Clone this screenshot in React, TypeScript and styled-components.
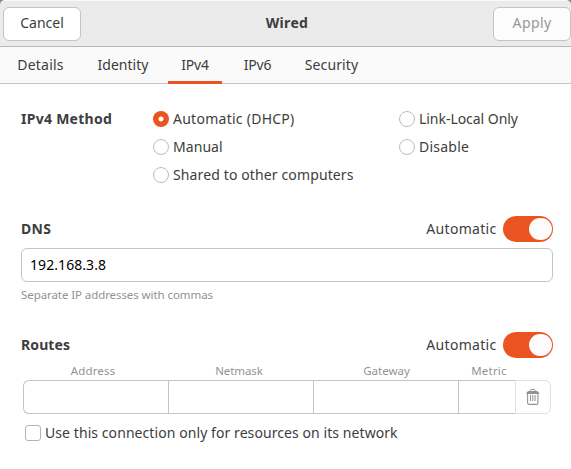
import React, { useState } from 'react';
import styled, { createGlobalStyle, css } from 'styled-components';

const accent = '#e95420';
const line = '#c4c4c4';

const GlobalStyle = createGlobalStyle`
  * { box-sizing: border-box; }
  body {
    margin: 0;
    background: #fff;
    color: #3d3d3d;
    font: 14px/20px "Noto Sans", "Open Sans", sans-serif;
  }
  button, input { font: inherit; color: inherit; }
`;

const Dialog = styled.div`
  width: 571px;
  height: 469px;
  overflow: hidden;
  background: #fff;
`;

const Corners = styled.div`
  height: 47px;
  background: #8a8a8a;
`;

const HeaderBar = styled.header`
  height: 47px;
  display: grid;
  grid-template-columns: 78px 1fr 78px;
  align-items: center;
  padding: 0 0 0 3px;
  background: #ebebeb;
  border-top: 1px solid #f9f9f9;
  border-bottom: 1px solid #b8b8b8;
  border-radius: 5px 5px 0 0;
`;

const HeaderButton = styled.button<{ $tracking?: number }>`
  height: 34px;
  padding: 0 0 2px;
  border: 1px solid ${line};
  border-radius: 6px;
  background: #fff;
  letter-spacing: ${p => p.$tracking ?? 0}px;
  &:disabled { background: #fcfcfc; color: #989898; }
`;

const Title = styled.h1`
  margin: 0;
  padding-bottom: 2px;
  text-align: center;
  font-size: 14px;
  line-height: 20px;
  letter-spacing: 0.3px;
`;

const TabBar = styled.nav`
  height: 37px;
  display: flex;
  padding-left: 3px;
  background: #fafafa;
  border-bottom: 1px solid ${line};
`;

const Tab = styled.button<{ $width: number; $active?: boolean; $tracking: number }>`
  width: ${p => p.$width}px;
  height: 37px;
  padding: 1px 0 0;
  border: 0;
  border-bottom: 3px solid ${p => (p.$active ? accent : 'transparent')};
  background: none;
  letter-spacing: ${p => p.$tracking}px;
  line-height: 34px;
`;

const Content = styled.main`
  padding: 25px 18px 0 21px;
`;

const MethodSection = styled.section`
  display: grid;
  grid-template-columns: 132px 246px 1fr;
  height: 107px;
`;

const SectionTitle = styled.h2<{ $tracking?: number }>`
  margin: 0;
  font-size: 14px;
  line-height: 20px;
  letter-spacing: ${p => p.$tracking ?? 0}px;
`;

const RadioColumn = styled.div`
  display: flex;
  flex-direction: column;
  gap: 8px;
`;

const Choice = styled.label<{ $tracking?: number }>`
  display: flex;
  align-items: center;
  gap: 4px;
  height: 20px;
  white-space: nowrap;
  letter-spacing: ${p => p.$tracking ?? 0}px;
`;

const Radio = styled.input.attrs({ type: 'radio' })`
  appearance: none;
  flex: none;
  width: 16px;
  height: 16px;
  margin: 0;
  border: 1px solid #bdbdbd;
  border-radius: 50%;
  background: #fff;
  &:checked {
    border: 0;
    background: radial-gradient(circle, #fff 2.1px, ${accent} 2.9px);
  }
`;

const Check = styled.input.attrs({ type: 'checkbox' })`
  appearance: none;
  flex: none;
  width: 16px;
  height: 16px;
  margin: 0;
  border: 1px solid #b4b4b4;
  border-radius: 3px;
  background: #fff;
  &:checked { background: ${accent}; }
`;

const SectionHead = styled.div`
  display: flex;
  align-items: center;
  height: 26px;
`;

const SwitchLabel = styled.span`
  margin-left: auto;
  margin-right: 6.5px;
  letter-spacing: 0.3px;
`;

const SwitchTrack = styled.button<{ $on: boolean }>`
  display: flex;
  align-items: center;
  justify-content: ${p => (p.$on ? 'flex-end' : 'flex-start')};
  width: 50px;
  height: 26px;
  padding: 0 1.5px;
  border: 0;
  border-radius: 13px;
  background: ${p => (p.$on ? accent : '#ccc')};
`;

const Knob = styled.span`
  width: 22.6px;
  height: 22.6px;
  border-radius: 50%;
  background: #fcfcfc;
`;

const field = css`
  min-width: 0;
  border: 0;
  outline: 0;
  background: transparent;
`;

const AddressInput = styled.input`
  ${field}
  display: block;
  width: 532px;
  height: 34px;
  margin-top: 6px;
  padding: 0 8px 2px;
  border: 1px solid ${line};
  border-radius: 6px;
  background: #fff;
  color: #000;
  letter-spacing: 0.07px;
`;

const Hint = styled.p`
  margin: 5px 0 29px;
  height: 16px;
  font-size: 11.5px;
  line-height: 16px;
  letter-spacing: -0.08px;
  color: #929292;
`;

const RouteTable = styled.div`
  display: grid;
  grid-template-columns: 145px 145px 145px 57px 36px;
  margin: 5px 0 0 2px;
  width: 528px;
`;

const ColumnLabel = styled.span<{ $tracking: number; $shift: number }>`
  height: 17px;
  margin-left: ${p => p.$shift}px;
  font-size: 11.5px;
  line-height: 16px;
  text-align: center;
  color: #929292;
  letter-spacing: ${p => p.$tracking}px;
`;

const RouteField = styled.input`
  ${field}
  height: 34px;
  padding: 0 8px;
  border: solid ${line};
  border-width: 1px 0 1px 1px;
  &:nth-of-type(1) { border-radius: 6px 0 0 6px; }
`;

const DeleteButton = styled.button`
  display: grid;
  place-items: center;
  height: 34px;
  padding: 0;
  border: 1px solid #dfdfdf;
  border-radius: 0 6px 6px 0;
  background: #fff;
`;

const ResourceRow = styled.div`
  margin: 9px 0 0 4px;
`;

const TrashIcon = () => (
  <svg width="14" height="16" viewBox="0 0 14 16" fill="none">
    <path d="M4.5 2.5V1.2Q4.5.5 5.2.5H8.3Q9 .5 9 1.2V2.5" stroke="#929292" />
    <path d="M.3 5V4Q1.5 2 3 2H10.5Q12 2 13.2 4V5Z" fill="#929292" />
    <path d="M1.6 4.5V14Q1.6 15.4 3 15.4H10.5Q11.9 15.4 11.9 14V4.5" stroke="#929292" strokeWidth="1.1" />
    <path d="M4.5 6V12M6.75 6V12M9 6V12" stroke="#929292" />
  </svg>
);

const tabs = [
  { name: 'Details', width: 75, tracking: 0.21 },
  { name: 'Identity', width: 90, tracking: 0.04 },
  { name: 'IPv4', width: 54, tracking: -0.2 },
  { name: 'IPv6', width: 71, tracking: -0.2 },
  { name: 'Security', width: 77, tracking: 0.1 },
];

const methods = [
  [
    { name: 'Automatic (DHCP)', tracking: 0.26 },
    { name: 'Manual', tracking: 0.06 },
    { name: 'Shared to other computers', tracking: 0.125 },
  ],
  [
    { name: 'Link-Local Only', tracking: -0.04 },
    { name: 'Disable', tracking: 0.23 },
  ],
];

const columns = [
  { name: 'Address', tracking: 0.165, shift: -5 },
  { name: 'Netmask', tracking: -0.1, shift: -3 },
  { name: 'Gateway', tracking: 0, shift: 2 },
  { name: 'Metric', tracking: 0.2, shift: 5 },
];

function AutomaticSwitch({ label }: { label: string }) {
  const [on, setOn] = useState(true);
  return (
    <>
      <SwitchLabel>Automatic</SwitchLabel>
      <SwitchTrack role="switch" aria-label={label} aria-checked={on} $on={on} onClick={() => setOn(!on)}>
        <Knob />
      </SwitchTrack>
    </>
  );
}

export default function App() {
  const [tab, setTab] = useState('IPv4');
  const [method, setMethod] = useState('Automatic (DHCP)');
  return (
    <Dialog>
      <GlobalStyle />
      <Corners>
        <HeaderBar>
          <HeaderButton>Cancel</HeaderButton>
          <Title>Wired</Title>
          <HeaderButton disabled $tracking={0.38}>Apply</HeaderButton>
        </HeaderBar>
      </Corners>
      <TabBar>
        {tabs.map(t => (
          <Tab key={t.name} $width={t.width} $tracking={t.tracking} $active={t.name === tab} onClick={() => setTab(t.name)}>
            {t.name}
          </Tab>
        ))}
      </TabBar>
      <Content>
        <MethodSection>
          <SectionTitle $tracking={0.27}>IPv4 Method</SectionTitle>
          {methods.map((column, i) => (
            <RadioColumn key={i}>
              {column.map(m => (
                <Choice key={m.name} $tracking={m.tracking}>
                  <Radio name="method" checked={m.name === method} onChange={() => setMethod(m.name)} />
                  {m.name}
                </Choice>
              ))}
            </RadioColumn>
          ))}
        </MethodSection>
        <SectionHead>
          <SectionTitle $tracking={0.33}>DNS</SectionTitle>
          <AutomaticSwitch label="Automatic DNS" />
        </SectionHead>
        <AddressInput aria-label="DNS" defaultValue="192.168.3.8" />
        <Hint>Separate IP addresses with commas</Hint>
        <SectionHead>
          <SectionTitle $tracking={0.1}>Routes</SectionTitle>
          <AutomaticSwitch label="Automatic routes" />
        </SectionHead>
        <RouteTable>
          {columns.map(c => (
            <ColumnLabel key={c.name} $tracking={c.tracking} $shift={c.shift}>{c.name}</ColumnLabel>
          ))}
          <span />
          {columns.map(c => <RouteField key={c.name} aria-label={c.name} />)}
          <DeleteButton aria-label="Delete route"><TrashIcon /></DeleteButton>
        </RouteTable>
        <ResourceRow>
          <Choice $tracking={0.075}>
            <Check />
            Use this connection only for resources on its network
          </Choice>
        </ResourceRow>
      </Content>
    </Dialog>
  );
}
